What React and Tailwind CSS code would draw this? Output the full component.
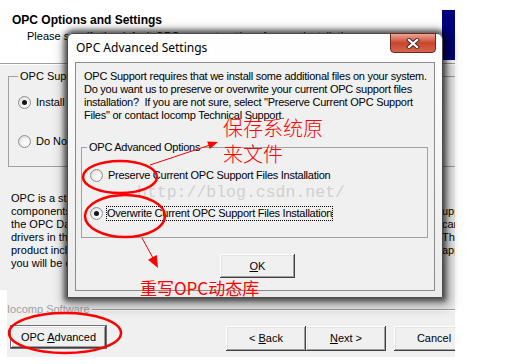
import React from "react";

function Radio({ checked }) {
  return (
    <span className="w-[13px] h-[13px] rounded-full border border-[#8e8f8f] bg-[radial-gradient(circle_at_60%_60%,#ffffff_0%,#f4f4f4_40%,#cdcdcd_100%)] flex items-center justify-center shrink-0">
      {checked && <span className="w-[5px] h-[5px] rounded-full bg-[#141414]" />}
    </span>
  );
}

function Btn({ children, className = "" }) {
  return (
    <div
      className={
        "flex items-center justify-center shrink-0 bg-[#f0f0f0] text-[11px] leading-[13px] text-black shadow-[inset_-1px_-1px_#404040,inset_1px_1px_#ffffff,inset_-2px_-2px_#a0a0a0,inset_2px_2px_#e3e3e3] " +
        className
      }
    >
      {children}
    </div>
  );
}

const paraLines = [
  ["OPC is a standard interface that allows client applications to communicate", ""],
  ["components from different vendors. This setup installs the files that s", "upport"],
  ["the OPC Data Access specification. If you are using OPC servers or", "can"],
  ["drivers in the future, select the install option below. The", "The"],
  ["product includes the OPC support files needed by the server", "applications"],
  ["you will be deploying on this computer.", ""],
];

export default function App() {
  return (
    <div className="relative w-[507px] h-[364px] bg-white overflow-hidden font-['Liberation_Sans',Arial,sans-serif] text-black">
      {/* background wizard */}
      <div className="w-[455px] h-[357px] overflow-hidden flex flex-col">
        <div className="h-[63px] w-[455px] bg-white flex justify-between shrink-0">
          <div className="pl-[12px] pt-[13px]">
            <div className="text-[12px] font-bold leading-[14px]">OPC Options and Settings</div>
            <div className="pl-[15px] text-[11px] leading-[13px] mt-[3px] whitespace-nowrap">
              Please specify the default OPC support settings for your installation.
            </div>
          </div>
          <div className="w-[13px] h-[50px] mt-[10px] bg-[#00007e]" />
        </div>
        <div className="h-px bg-[#a0a0a0] shrink-0" />
        <div className="h-px bg-white shrink-0" />
        <div className="h-[225px] w-[520px] bg-[#f0f0f0] pl-[8px] pt-[5px] shrink-0 text-[11px] leading-[13px]">
          <fieldset className="border border-[#a0a0a0] h-[97px] w-[520px]">
            <legend className="ml-[9px] px-[2px] leading-[13px]">OPC Support Files</legend>
            <div className="flex items-center gap-[5px] ml-[9px] mt-[13px] h-[13px]">
              <Radio checked />
              <span>Install Support Files</span>
            </div>
            <div className="flex items-center gap-[5px] ml-[9px] mt-[26px] h-[13px]">
              <Radio />
              <span>Do Not Install Support Files</span>
            </div>
          </fieldset>
          <div className="ml-[3px] mt-[25px]">
            {paraLines.map(([l, r], i) => (
              <div key={i} className="flex h-[13px] whitespace-nowrap">
                <span className="w-[431px] shrink-0 overflow-hidden">{l}</span>
                <span>{r}</span>
              </div>
            ))}
          </div>
        </div>
        <div className="flex h-[67px] shrink-0">
          <div className="w-[7px] bg-white shrink-0" />
          <div className="w-[520px] shrink-0 bg-[#f0f0f0] flex flex-col">
            <div className="flex items-center h-[13px] mt-[13px] text-[11px]">
              <span className="text-[#a0a0a0] leading-[13px]">Iocomp Software</span>
              <div className="flex-1 ml-[2px] flex flex-col">
                <div className="h-px bg-[#a0a0a0]" />
                <div className="h-px bg-white" />
              </div>
            </div>
            <div className="flex mt-[9px]">
              <Btn className="ml-[3px] w-[97px] h-[24px] border border-[#707070]">
                <span>
                  OPC <span className="underline">A</span>dvanced
                </span>
              </Btn>
              <Btn className="ml-[119px] mt-px w-[80px] h-[25px]">
                <span>
                  &lt; <span className="underline">B</span>ack
                </span>
              </Btn>
              <Btn className="mt-px w-[80px] h-[25px]">
                <span>
                  <span className="underline">N</span>ext &gt;
                </span>
              </Btn>
              <Btn className="ml-[8px] mt-px w-[80px] h-[25px]">Cancel</Btn>
            </div>
          </div>
        </div>
      </div>

      {/* dialog */}
      <div className="absolute left-[67px] top-[33px] w-[376px] h-[265px] rounded-t-[6px] border border-[#4a4a4a] bg-gradient-to-b from-[#ffffff] to-[#ebebeb] shadow-[0_0_5px_3px_rgba(0,0,0,0.55),2px_3px_12px_5px_rgba(0,0,0,0.35)] flex flex-col">
        <div className="h-[28px] flex justify-between items-start pl-[8px] pr-[6px] shrink-0">
          <span className="mt-[7px] text-[12px] leading-[14px] font-['Noto_Sans',sans-serif] text-black">
            OPC Advanced Settings
          </span>
          <div className="-mt-px w-[46px] h-[20px] rounded-b-[4px] border border-[#6b2a1f] bg-gradient-to-b from-[#eba595] via-[#c9442d] to-[#d7664c] flex items-center justify-center">
            <svg width="14" height="11" viewBox="0 0 14 11">
              <path d="M3 2 L11 9 M11 2 L3 9" stroke="#3d2a28" strokeWidth="4" strokeLinecap="square" />
              <path d="M3 2 L11 9 M11 2 L3 9" stroke="#ffffff" strokeWidth="2.2" strokeLinecap="square" />
            </svg>
          </div>
        </div>
        <div className="mx-[7px] mb-[6px] flex-1 border border-[#8b8b8b] bg-[#f0f0f0] flex flex-col text-[11px] leading-[13px] tracking-[-0.25px]">
          <div className="pt-[7px] pl-[8px] whitespace-pre">
            <div>OPC Support requires that we install some additional files on your system.</div>
            <div>Do you want us to preserve or overwrite your current OPC support files</div>
            <div>installation?  If you are not sure, select "Preserve Current OPC Support</div>
            <div>Files" or contact Iocomp Technical Support.</div>
          </div>
          <fieldset className="ml-[5px] mr-[6px] mt-[19px] h-[97px] border border-[#a0a0a0]">
            <legend className="ml-[5px] px-[2px] leading-[13px]">OPC Advanced Options</legend>
            <div className="flex items-center gap-[5px] ml-[8px] mt-[15px] h-[13px]">
              <Radio />
              <span>Preserve Current OPC Support Files Installation</span>
            </div>
            <div className="flex items-center gap-[3px] ml-[8px] mt-[25px] h-[13px]">
              <Radio checked />
              <span className="border border-dotted border-black leading-[13px]">
                Overwrite Current OPC Support Files Installation
              </span>
            </div>
          </fieldset>
          <Btn className="ml-[144px] mt-[16px] w-[75px] h-[24px] tracking-normal">
            <span>
              <span className="underline">O</span>K
            </span>
          </Btn>
        </div>
      </div>

      {/* watermark */}
      <div className="absolute left-[137px] top-[183px] text-[16.5px] leading-[20px] font-['Liberation_Mono',monospace] text-[#d0d0d0] whitespace-nowrap pointer-events-none">
        http://blog.csdn.net/
      </div>

      {/* annotations */}
      <svg className="absolute left-0 top-0 pointer-events-none" width="507" height="364" viewBox="0 0 507 364">
        <ellipse cx="120" cy="177" rx="37" ry="16" fill="none" stroke="#ff0000" strokeWidth="2.5" />
        <ellipse cx="125" cy="216" rx="40" ry="21" fill="none" stroke="#ff0000" strokeWidth="2.5" />
        <ellipse cx="65" cy="333" rx="56" ry="20" fill="none" stroke="#ff0000" strokeWidth="2.5" />
        <line x1="150" y1="165" x2="210" y2="145" stroke="#ff0000" strokeWidth="1" />
        <polygon points="218,142 209.8,149 207.2,141.4" fill="#ff0000" />
        <line x1="142" y1="238" x2="153" y2="258" stroke="#ff0000" strokeWidth="1" />
        <polygon points="158,268 156.8,255.1 148,259.8" fill="#ff0000" />
      </svg>
      <div className="absolute left-[223px] top-[115px] text-[20px] leading-[26px] text-[#ff0000] font-['Noto_Sans_CJK_SC',sans-serif] font-light pointer-events-none">
        <div>保存系统原</div>
        <div>来文件</div>
      </div>
      <div className="absolute left-[140px] top-[278px] text-[17px] leading-[20px] text-[#ff0000] font-['Noto_Sans_CJK_SC',sans-serif] whitespace-nowrap pointer-events-none">
        重写OPC动态库
      </div>
    </div>
  );
}
